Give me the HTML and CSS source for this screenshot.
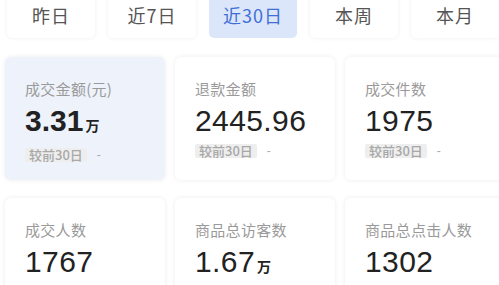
FILE: index.html
```html
<!DOCTYPE html>
<html lang="zh">
<head>
<meta charset="utf-8">
<link rel="stylesheet" href="styles.css">
</head>
<body>
<div class="page">
  <div class="tabs">
    <div class="tab">昨日</div>
    <div class="tab">近7日</div>
    <div class="tab active">近30日</div>
    <div class="tab">本周</div>
    <div class="tab">本月</div>
  </div>
  <div class="grid">
    <div class="card selected">
      <div class="label">成交金额(元)</div>
      <div class="value strong">3.31<span class="unit">万</span></div>
      <div class="cmp"><span class="chip">较前30日</span><span class="dash">-</span></div>
    </div>
    <div class="card">
      <div class="label">退款金额</div>
      <div class="value">2445.96</div>
      <div class="cmp"><span class="chip">较前30日</span><span class="dash">-</span></div>
    </div>
    <div class="card">
      <div class="label">成交件数</div>
      <div class="value">1975</div>
      <div class="cmp"><span class="chip">较前30日</span><span class="dash">-</span></div>
    </div>
    <div class="card">
      <div class="label">成交人数</div>
      <div class="value">1767</div>
      <div class="cmp"><span class="chip">较前30日</span><span class="dash">-</span></div>
    </div>
    <div class="card">
      <div class="label">商品总访客数</div>
      <div class="value">1.67<span class="unit">万</span></div>
      <div class="cmp"><span class="chip">较前30日</span><span class="dash">-</span></div>
    </div>
    <div class="card">
      <div class="label">商品总点击人数</div>
      <div class="value">1302</div>
      <div class="cmp"><span class="chip">较前30日</span><span class="dash">-</span></div>
    </div>
  </div>
</div>
</body>
</html>
```
FILE: styles.css
```css
html, body {
  margin: 0;
  padding: 0;
  background: #ffffff;
  overflow: hidden;
}
body {
  width: 499px;
  height: 285px;
  font-family: "Liberation Sans", "Noto Sans CJK SC", sans-serif;
}
.page {
  padding-left: 5px;
}
.tabs {
  display: flex;
  gap: 13px;
  margin-top: -8px;
  margin-left: 2px;
}
.tab {
  flex: 0 0 88px;
  height: 46px;
  display: flex;
  align-items: center;
  justify-content: center;
  background: #ffffff;
  border-radius: 5px;
  box-shadow: 0 0 4px rgba(0, 0, 0, 0.07);
  font-family: "Noto Sans CJK SC", sans-serif;
  font-size: 18px;
  color: #555555;
  letter-spacing: 1px;
}
.tab.active {
  background: #dbe6fa;
  color: #3f6fd6;
  box-shadow: none;
}
.grid {
  margin-top: 19px;
  display: grid;
  grid-template-columns: repeat(3, 160px);
  grid-auto-rows: 123px;
  column-gap: 10px;
  row-gap: 18px;
}
.card {
  background: #ffffff;
  border-radius: 6px;
  box-shadow: 0 0 5px rgba(0, 0, 0, 0.08);
  padding: 22px 0 0 20px;
  box-sizing: border-box;
}
.card.selected {
  background: #eef2fa;
}
.label {
  font-family: "Noto Sans CJK SC", sans-serif;
  font-size: 15px;
  line-height: 20px;
  color: #9a9a9a;
  letter-spacing: 0.3px;
}
.value {
  margin-top: 5px;
  font-size: 30px;
  line-height: 34px;
  color: #222222;
  letter-spacing: 0.4px;
}
.value.strong {
  font-weight: 700;
  letter-spacing: 0;
}
.unit {
  font-family: "Noto Sans CJK SC", sans-serif;
  font-size: 14px;
  font-weight: 700;
  margin-left: 2px;
}
.cmp {
  margin-top: 6px;
  display: flex;
  align-items: center;
}
.chip {
  background: #eeeeee;
  color: #a8a8a8;
  font-family: "Noto Sans CJK SC", sans-serif;
  font-size: 13px;
  font-weight: 500;
  line-height: 14px;
  padding: 0 4px;
  border-radius: 2px;
}
.dash {
  margin-left: 10px;
  color: #aaaaaa;
  font-size: 12px;
}
```
